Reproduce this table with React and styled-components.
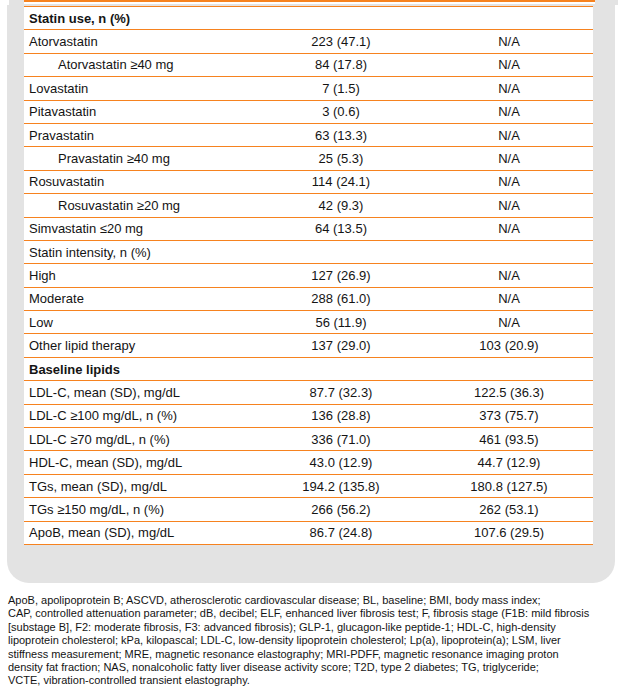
import React from 'react';
import styled, { createGlobalStyle } from 'styled-components';

const GlobalStyle = createGlobalStyle`
  body {
    margin: 0;
    background: #fff;
    font-family: "Liberation Sans", Arial, sans-serif;
    color: #141414;
  }
`;

const ORANGE = '#f6821f';
const GRAY = '#e3e3e3';

const Remnant = styled.div`
  margin-left: 9px;
  width: 609px;
  height: 5px;
  background: ${GRAY};
  display: flex;
`;

const RemnantCell = styled.div`
  margin-left: 15px;
  width: 571px;
  height: 4px;
  background: #fff;
  border-top: 2px solid ${ORANGE};
  box-sizing: border-box;
`;

const Panel = styled.div`
  margin-left: 7px;
  width: 608px;
  box-sizing: border-box;
  background: ${GRAY};
  border-radius: 0 0 22px 22px;
  padding: 1px 22px 38px 17px;
`;

const Table = styled.div`
  background: #fff;
  border-top: 1.5px solid ${ORANGE};
`;

const Row = styled.div`
  display: grid;
  grid-template-columns: 233px 168px 168px;
  height: 23.4px;
  box-sizing: border-box;
  border-bottom: 1.5px solid ${ORANGE};
  font-size: 13px;
  align-items: center;
`;

const Label = styled.div`
  padding-left: ${(p) => (p.$indent ? 34 : 5)}px;
  font-weight: ${(p) => (p.$bold ? 700 : 400)};
  white-space: nowrap;
`;

const Value = styled.div`
  text-align: center;
  white-space: nowrap;
`;

const Footnote = styled.p`
  margin: 11px 0 0;
  padding: 0 8px;
  font-size: 11px;
  line-height: 13.4px;
  white-space: nowrap;
`;

const rows = [
  { label: 'Statin use, n (%)', bold: true, a: '', b: '' },
  { label: 'Atorvastatin', a: '223 (47.1)', b: 'N/A' },
  { label: 'Atorvastatin ≥40 mg', indent: true, a: '84 (17.8)', b: 'N/A' },
  { label: 'Lovastatin', a: '7 (1.5)', b: 'N/A' },
  { label: 'Pitavastatin', a: '3 (0.6)', b: 'N/A' },
  { label: 'Pravastatin', a: '63 (13.3)', b: 'N/A' },
  { label: 'Pravastatin ≥40 mg', indent: true, a: '25 (5.3)', b: 'N/A' },
  { label: 'Rosuvastatin', a: '114 (24.1)', b: 'N/A' },
  { label: 'Rosuvastatin ≥20 mg', indent: true, a: '42 (9.3)', b: 'N/A' },
  { label: 'Simvastatin ≤20 mg', a: '64 (13.5)', b: 'N/A' },
  { label: 'Statin intensity, n (%)', a: '', b: '' },
  { label: 'High', a: '127 (26.9)', b: 'N/A' },
  { label: 'Moderate', a: '288 (61.0)', b: 'N/A' },
  { label: 'Low', a: '56 (11.9)', b: 'N/A' },
  { label: 'Other lipid therapy', a: '137 (29.0)', b: '103 (20.9)' },
  { label: 'Baseline lipids', bold: true, a: '', b: '' },
  { label: 'LDL-C, mean (SD), mg/dL', a: '87.7 (32.3)', b: '122.5 (36.3)' },
  { label: 'LDL-C ≥100 mg/dL, n (%)', a: '136 (28.8)', b: '373 (75.7)' },
  { label: 'LDL-C ≥70 mg/dL, n (%)', a: '336 (71.0)', b: '461 (93.5)' },
  { label: 'HDL-C, mean (SD), mg/dL', a: '43.0 (12.9)', b: '44.7 (12.9)' },
  { label: 'TGs, mean (SD), mg/dL', a: '194.2 (135.8)', b: '180.8 (127.5)' },
  { label: 'TGs ≥150 mg/dL, n (%)', a: '266 (56.2)', b: '262 (53.1)' },
  { label: 'ApoB, mean (SD), mg/dL', a: '86.7 (24.8)', b: '107.6 (29.5)' },
];

const footLines = [
  'ApoB, apolipoprotein B; ASCVD, atherosclerotic cardiovascular disease; BL, baseline; BMI, body mass index;',
  'CAP, controlled attenuation parameter; dB, decibel; ELF, enhanced liver fibrosis test; F, fibrosis stage (F1B: mild fibrosis',
  '[substage B], F2: moderate fibrosis, F3: advanced fibrosis); GLP-1, glucagon-like peptide-1; HDL-C, high-density',
  'lipoprotein cholesterol; kPa, kilopascal; LDL-C, low-density lipoprotein cholesterol; Lp(a), lipoprotein(a); LSM, liver',
  'stiffness measurement; MRE, magnetic resonance elastography; MRI-PDFF, magnetic resonance imaging proton',
  'density fat fraction; NAS, nonalcoholic fatty liver disease activity score; T2D, type 2 diabetes; TG, triglyceride;',
  'VCTE, vibration-controlled transient elastography.',
];

export default function App() {
  return (
    <>
      <GlobalStyle />
      <Remnant>
        <RemnantCell />
      </Remnant>
      <Panel>
        <Table>
          {rows.map((r) => (
            <Row key={r.label}>
              <Label $bold={r.bold} $indent={r.indent}>{r.label}</Label>
              <Value>{r.a}</Value>
              <Value>{r.b}</Value>
            </Row>
          ))}
        </Table>
      </Panel>
      <Footnote>
        {footLines.map((line, i) => (
          <React.Fragment key={i}>
            {line}
            {i < footLines.length - 1 && <br />}
          </React.Fragment>
        ))}
      </Footnote>
    </>
  );
}
